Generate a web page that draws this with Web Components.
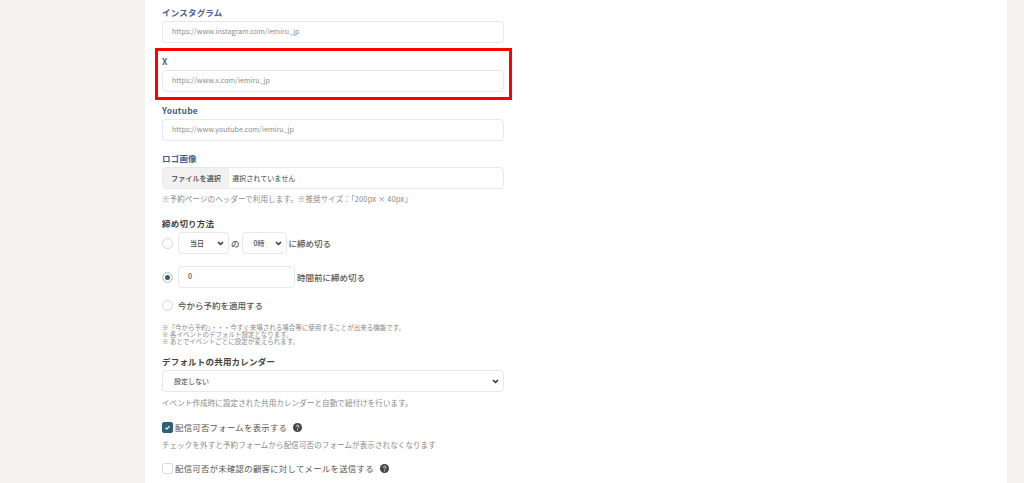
<!DOCTYPE html>
<html lang="ja">
<head>
<meta charset="utf-8">
<title>設定</title>
<style>
    html, body { margin: 0; height: 483px; overflow: hidden; background: #f4f3f1; }
    body { font-family: "Noto Sans CJK JP", "Noto Sans", sans-serif; color: #555; }
</style>
</head>
<body>
<template id="settings-panel-tpl">
    <style>
        :host { display: block; box-sizing: border-box; position: relative; width: 862px; height: 483px; margin-left: 145px; padding: 5px 0 0 17px; background: #fff; overflow: hidden; }
        ::slotted(*) { width: 342px; }
        .mark { position: absolute; left: 10px; top: 48px; width: 357px; height: 52px; box-sizing: border-box; border: 3px solid #f00; }
    </style>
    <slot></slot>
    <div class="mark"></div>
</template>

<template id="form-field-tpl">
    <style>
        :host { display: block; margin-bottom: var(--after, 11px); }
        .label { display: block; height: 16px; line-height: 14px; font-size: 8.5px; font-weight: 700; letter-spacing: .2px; color: var(--label, #46608f); }
    </style>
    <span class="label"><slot name="label"></slot></span>
    <slot></slot>
</template>

<template id="text-box-tpl">
    <style>
        :host { display: block; box-sizing: border-box; height: 22px; width: var(--w, 100%); padding-left: var(--pad, 9px); line-height: 19px; border: 1px solid #e8e8e8; border-radius: 4px; background: #fff; font-size: 7.1px; color: #8d8d8d; white-space: nowrap; }
    </style>
    <slot></slot>
</template>

<template id="file-box-tpl">
    <style>
        :host { display: flex; box-sizing: border-box; height: 22px; line-height: 20px; border: 1px solid #e8e8e8; border-radius: 4px; overflow: hidden; background: #fff; font-size: 7.1px; color: #444; }
        .btn { width: 66px; padding-left: 8px; box-sizing: border-box; background: #f1f1f1; font-weight: 500; letter-spacing: .05px; }
        .name { padding-left: 3px; }
    </style>
    <span class="btn">ファイルを選択</span><span class="name"><slot></slot></span>
</template>

<template id="select-box-tpl">
    <style>
        :host { display: flex; align-items: center; justify-content: space-between; box-sizing: border-box; height: 22px; width: var(--w, 100%); padding: 0 4px 0 var(--pad, 11px); border: 1px solid #e8e8e8; border-radius: 4px; background: #fff; font-size: 7px; color: #444; flex: none; }
        svg { width: 7px; height: 5px; }
    </style>
    <span><slot></slot></span>
    <svg viewBox="0 0 7 5"><path d="M1 1l2.500 2.500L6 1" fill="none" stroke="#333" stroke-width="1.5"/></svg>
</template>

<template id="radio-row-tpl">
    <style>
        :host { display: flex; align-items: center; height: 22px; font-size: 8.5px; font-weight: 500; color: #555; margin-bottom: var(--after, 13px); white-space: nowrap; }
        .dot { flex: none; box-sizing: border-box; width: 11px; height: 11px; margin: 0 5px 0 0; border: 1px solid #d5d5d5; border-radius: 50%; background: #fff; }
        :host([checked]) .dot { border: 1px solid #ddd; background: #2f6078; box-shadow: inset 0 0 0 2px #fff; }
        .body { display: flex; align-items: center; gap: 2px; }
    </style>
    <span class="dot"></span><span class="body"><slot></slot></span>
</template>

<template id="check-row-tpl">
    <style>
        :host { display: flex; align-items: center; height: 12px; font-size: 8.4px; letter-spacing: .28px; color: #555; white-space: nowrap; }
        .box { flex: none; box-sizing: border-box; display: flex; align-items: center; justify-content: center; width: 11px; height: 11px; margin-right: 2px; border: 1px solid #ddd; border-radius: 2px; background: #fff; }
        :host([checked]) .box { background: #2f6078; border-color: #2f6078; }
        svg.tick { width: 7px; height: 7px; display: none; }
        :host([checked]) svg.tick { display: block; }
        svg.help { width: 9px; height: 9px; margin-left: 6px; }
    </style>
    <span class="box"><svg class="tick" viewBox="0 0 7 7"><path d="M1.500 3.700l1.400 1.400 2.600-3" fill="none" stroke="#fff" stroke-width="1.1"/></svg></span>
    <slot></slot>
    <svg class="help" viewBox="0 0 9 9"><circle cx="4.500" cy="4.500" r="4.500" fill="#444"/><path d="M3.200 3.500c0-1.700 2.700-1.700 2.700-.1 0 1-1.400 1-1.400 2" fill="none" stroke="#fff" stroke-width=".9"/><circle cx="4.500" cy="6.800" r=".6" fill="#fff"/></svg>
</template>

<template id="help-text-tpl">
    <style>
        :host { display: block; font-size: var(--size, 7.5px); line-height: var(--lh, 12px); color: #8a8a8a; letter-spacing: var(--ls, .12px); white-space: nowrap; margin: var(--m, 0); }
    </style>
    <slot></slot>
</template>

<settings-panel>
    <form-field><span slot="label">インスタグラム</span><text-box>https://www.instagram.com/iemiru_jp</text-box></form-field>
    <form-field><span slot="label">X</span><text-box>https://www.x.com/iemiru_jp</text-box></form-field>
    <form-field style="--after:10px"><span slot="label">Youtube</span><text-box>https://www.youtube.com/iemiru_jp</text-box></form-field>
    <form-field style="--after:0"><span slot="label">ロゴ画像</span><file-box>選択されていません</file-box></form-field>
    <help-text style="--m:4px 0 11px">※予約ページのヘッダーで利用します。※推奨サイズ：「200px × 40px」</help-text>
    <form-field style="--label:#444;--after:0"><span slot="label">締め切り方法</span>
        <radio-row style="--after:12px"><select-box style="--w:51px;--pad:11px">当日</select-box><span>の</span><select-box style="--w:45px;--pad:11px">0時</select-box><span>に締め切る</span></radio-row>
        <radio-row checked style="--after:6px"><text-box style="--w:117px;--pad:9px;color:#555">0</text-box><span>時間前に締め切る</span></radio-row>
        <radio-row style="--after:8px">今から予約を適用する</radio-row>
    </form-field>
    <help-text style="--size:6.5px;--lh:7px;--m:0 0 9px;--ls:0">※「今から予約」・・・今すぐ来場される場合等に使用することが出来る機能です。<br>※ 各イベントのデフォルト設定となります。<br>※ あとでイベントごとに設定が変えられます。</help-text>
    <form-field style="--label:#444;--after:0"><span slot="label">デフォルトの共用カレンダー</span><select-box>設定しない</select-box></form-field>
    <help-text style="--m:5px 0 12px">イベント作成時に設定された共用カレンダーと自動で紐付けを行います。</help-text>
    <check-row checked>配信可否フォームを表示する</check-row>
    <help-text style="--m:6px 0 11px">チェックを外すと予約フォームから配信可否のフォームが表示されなくなります</help-text>
    <check-row>配信可否が未確認の顧客に対してメールを送信する</check-row>
</settings-panel>

<script>
    // every element below is only a box with a shadow root cloned from its template
    const define = (name, cls) => customElements.define(name, cls);

    class TemplateElement extends HTMLElement {
        constructor() {
            super();
            const tpl = document.getElementById(`${this.constructor.tag}-tpl`);
            this.attachShadow({ mode: 'open' }).appendChild(tpl.content.cloneNode(true));
        }
    }

    ['settings-panel', 'form-field', 'text-box', 'file-box', 'select-box', 'radio-row', 'check-row', 'help-text'].forEach(tag => {
        define(tag, class extends TemplateElement {
            static get tag() { return tag; }
        });
    });
</script>
</body>
</html>
